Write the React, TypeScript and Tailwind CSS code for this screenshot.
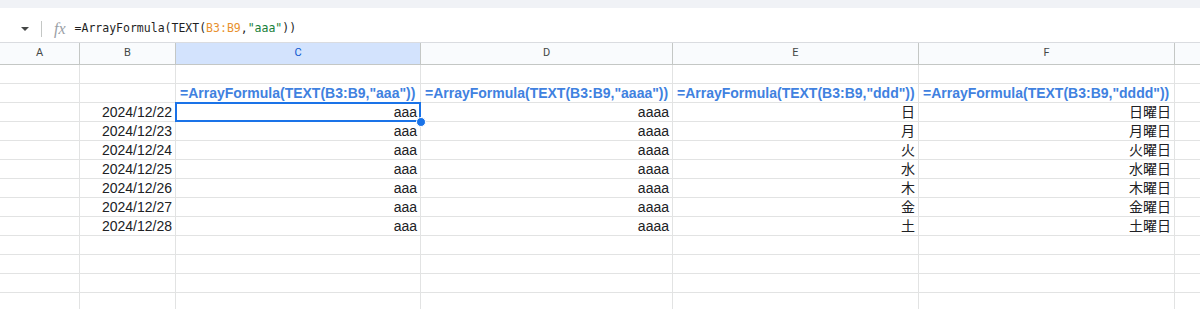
import React from 'react'

const cols = [
  { key: 'A', w: 'w-[80px]' },
  { key: 'B', w: 'w-[96px]' },
  { key: 'C', w: 'w-[245px]' },
  { key: 'D', w: 'w-[252px]' },
  { key: 'E', w: 'w-[246px]' },
  { key: 'F', w: 'w-[256px]' },
]

const formulas = [
  '=ArrayFormula(TEXT(B3:B9,"aaa"))',
  '=ArrayFormula(TEXT(B3:B9,"aaaa"))',
  '=ArrayFormula(TEXT(B3:B9,"ddd"))',
  '=ArrayFormula(TEXT(B3:B9,"dddd"))',
]

const days = ['日', '月', '火', '水', '木', '金', '土']
const dates = ['2024/12/22', '2024/12/23', '2024/12/24', '2024/12/25', '2024/12/26', '2024/12/27', '2024/12/28']

const font = { fontFamily: '"Liberation Sans", Arial, "Noto Sans CJK JP", sans-serif' }

function Cell({
  w,
  children,
  align = 'right',
  tone = 'text-[#202124]',
}: {
  w: string
  children?: React.ReactNode
  align?: 'left' | 'right'
  tone?: string
}) {
  return (
    <div
      className={`${w} shrink-0 h-full border-r border-b border-[#e2e3e3] flex items-center text-[14px] whitespace-nowrap ${tone} ${align === 'right' ? 'justify-end pr-[3px]' : 'justify-start pl-[4px]'}`}
    >
      {children}
    </div>
  )
}

function Row({ children }: { children: React.ReactNode }) {
  return <div className="flex h-[19px]">{children}</div>
}

export default function App() {
  return (
    <div className="w-[1200px] h-[309px] overflow-hidden bg-white" style={font}>
      {/* top band */}
      <div className="h-[8px] bg-[#f0f2f6]" />

      {/* formula bar */}
      <div className="h-[34px] pt-2 flex items-center">
        <div className="w-[41px] flex justify-center pl-[9px]">
          <svg width="10" height="6" viewBox="0 0 10 6">
            <path d="M1 1 L5 5 L9 1 Z" fill="#444746" />
          </svg>
        </div>
        <div className="w-px h-[16px] bg-[#c4c7c5]" />
        <span
          className="ml-[12px] text-[16px] text-[#9aa0a6] italic"
          style={{ fontFamily: '"Liberation Serif", serif' }}
        >
          fx
        </span>
        <span
          className="ml-[9px] text-[11.5px] text-[#1f1f1f]"
          style={{ fontFamily: '"DejaVu Sans Mono", monospace' }}
        >
          =ArrayFormula(TEXT(<span className="text-[#e8912d]">B3:B9</span>,<span className="text-[#188038]">"aaa"</span>))
        </span>
      </div>

      {/* column headers */}
      <div className="flex h-[23px] border-t border-[#dadce0]">
        {cols.map((c) => (
          <div
            key={c.key}
            className={`${c.w} shrink-0 h-full border-r border-b border-[#c4c7c5] flex items-center justify-center text-[11px] ${c.key === 'C' ? 'bg-[#d3e3fd] text-[#0b57d0]' : 'bg-[#f9fbfd] text-[#444746]'}`}
            style={{ fontFamily: 'Roboto, "Liberation Sans", sans-serif' }}
          >
            {c.key}
          </div>
        ))}
        <div className="flex-1 h-full border-b border-[#c4c7c5] bg-[#f9fbfd]" />
      </div>

      {/* row 1 */}
      <Row>
        {cols.map((c) => (
          <Cell key={c.key} w={c.w} />
        ))}
        <div className="flex-1 border-b border-[#e2e3e3]" />
      </Row>

      {/* row 2: formulas */}
      <Row>
        <Cell w={cols[0].w} />
        <Cell w={cols[1].w} />
        {formulas.map((f, i) => (
          <Cell key={f} w={cols[i + 2].w} align="left" tone="text-[#4081e0] font-bold">
            {f}
          </Cell>
        ))}
        <div className="flex-1 border-b border-[#e2e3e3]" />
      </Row>

      {/* data rows */}
      {dates.map((d, i) => (
        <Row key={d}>
          <Cell w={cols[0].w} />
          <Cell w={cols[1].w}>{d}</Cell>
          <div className={`shrink-0 h-full ${i === 0 ? 'relative z-20' : ''}`}>
            <Cell w={cols[2].w}>aaa</Cell>
            {i === 0 && (
              <>
                <div className="absolute -left-px -top-px right-0 bottom-0 border-2 border-[#1a73e8] pointer-events-none" />
                <div className="absolute -right-[5px] -bottom-[5px] w-[10px] h-[10px] rounded-full bg-[#1a73e8] border border-white" />
              </>
            )}
          </div>
          <Cell w={cols[3].w}>aaaa</Cell>
          <Cell w={cols[4].w}>{days[i]}</Cell>
          <Cell w={cols[5].w}>{days[i]}曜日</Cell>
          <div className="flex-1 border-b border-[#e2e3e3]" />
        </Row>
      ))}

      {/* empty rows */}
      {[0, 1, 2, 3].map((r) => (
        <Row key={r}>
          {cols.map((c) => (
            <Cell key={c.key} w={c.w} />
          ))}
          <div className="flex-1 border-b border-[#e2e3e3]" />
        </Row>
      ))}
    </div>
  )
}
